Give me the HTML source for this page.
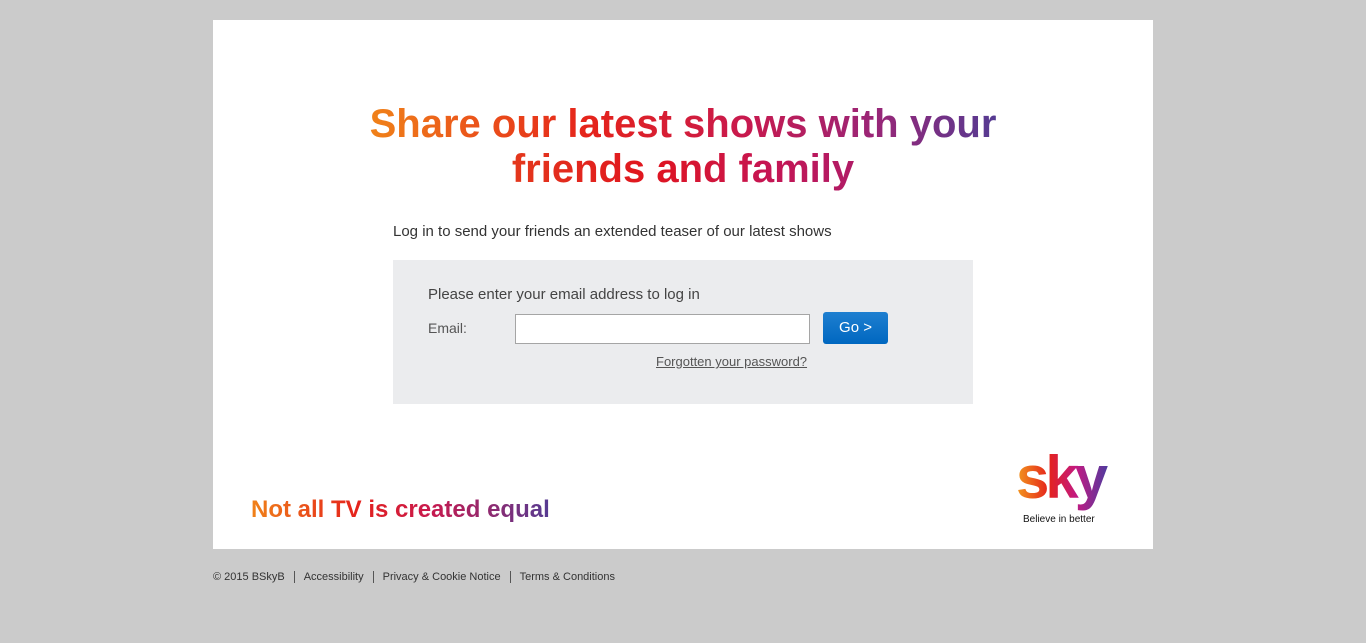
<!DOCTYPE html>
<html><head><meta charset="utf-8"><style>
body{margin:0;background:#cbcbcb;font-family:"Liberation Sans",sans-serif;width:1366px;height:643px;overflow:hidden;position:relative}
.card{position:absolute;left:213px;top:20px;width:940px;height:529px;background:#fff}
.h{position:absolute;left:0;width:940px;top:82px;text-align:center;font-size:40px;line-height:45px;letter-spacing:0px;font-weight:bold;margin:0}
.g{background:linear-gradient(90deg,#f08219 0%,#e5231b 35%,#c8194e 60%,#9b2576 80%,#553b92 100%);-webkit-background-clip:text;background-clip:text;color:transparent}
.l2{display:inline-block;background:linear-gradient(90deg,#e4381c 0%,#e0151f 40%,#c51553 75%,#b01b66 100%);-webkit-background-clip:text;background-clip:text;color:transparent}
.sub{position:absolute;left:180px;top:203px;font-size:15px;color:#333}
.box{position:absolute;left:180px;top:240px;width:580px;height:144px;background:#ebecee}
.p{position:absolute;left:35px;top:26px;font-size:15px;color:#444}
.el{position:absolute;left:35px;top:60px;font-size:14px;color:#555}
.in{position:absolute;left:122px;top:54px;width:293px;height:28px;border:1px solid #a5a5a5;background:#fff}
.go{position:absolute;left:430px;top:52px;width:65px;height:32px;border-radius:3px;background:linear-gradient(#1e7fd0,#0067c0);color:#fff;font-size:15px;text-align:center;line-height:32px}
.fg{position:absolute;left:263px;top:94px;font-size:13px;color:#555;text-decoration:underline}
.tag{position:absolute;left:38px;top:476px;font-size:24px;font-weight:bold;letter-spacing:0px;background:linear-gradient(90deg,#f08219 0%,#e5231b 35%,#c8194e 60%,#553b92 100%);-webkit-background-clip:text;background-clip:text;color:transparent}
.logo{position:absolute;left:803px;top:425px}
.bib{position:absolute;left:810px;top:494px;font-size:10px;color:#111}
.foot{position:absolute;left:213px;top:571px;font-size:11px;color:#333}
.foot span{padding:0 9px;border-left:1px solid #555}
.foot span:first-child{padding-left:0;border:none}
</style></head><body>
<div class="card">
<h1 class="h"><span class="g">Share our latest shows with your</span><br><span class="l2">friends and family</span></h1>
<div class="sub">Log in to send your friends an extended teaser of our latest shows</div>
<div class="box">
<div class="p">Please enter your email address to log in</div>
<div class="el">Email:</div>
<div class="in"></div>
<div class="go">Go &gt;</div>
<div class="fg">Forgotten your password?</div>
</div>
<div class="tag">Not all TV is created equal</div>
<svg class="logo" width="100" height="70" viewBox="0 0 100 70">
<defs><linearGradient id="sg" x1="0" x2="1" y1="0" y2="0"><stop offset="0" stop-color="#f39a1f"/><stop offset=".35" stop-color="#e5231b"/><stop offset=".65" stop-color="#c21a82"/><stop offset="1" stop-color="#4b3ca0"/></linearGradient></defs>
<text x="0" y="53" font-family="Liberation Sans,sans-serif" font-size="60" font-weight="bold" fill="url(#sg)" letter-spacing="-4">sky</text>
</svg>
<div class="bib">Believe in better</div>
</div>
<div class="foot"><span>© 2015 BSkyB</span><span>Accessibility</span><span>Privacy &amp; Cookie Notice</span><span>Terms &amp; Conditions</span></div>
</body></html>
